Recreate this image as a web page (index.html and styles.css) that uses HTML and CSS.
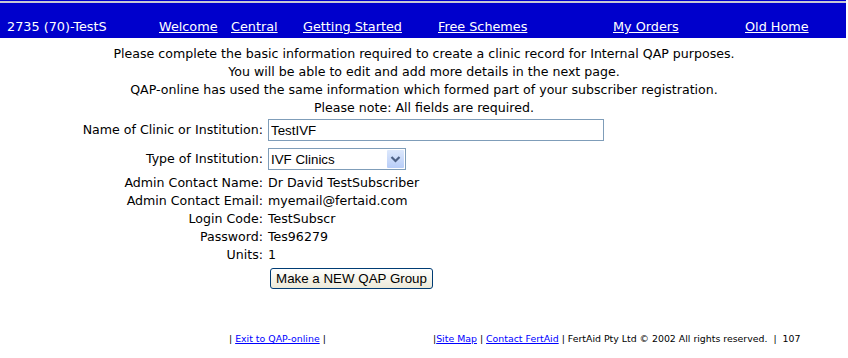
FILE: index.html
```html
<!DOCTYPE html>
<html lang="en">
<head>
  <meta charset="UTF-8" />
  <title>QAP-online - New Clinic</title>
  <link rel="stylesheet" href="styles.css">
</head>
<body>
  <div class="topbar">
    <div class="topbar-rule"></div>
    <div class="nav">
      <span class="nav-id">2735 (70)-TestS</span>
      <a href="#">Welcome</a>
      <a href="#">Central</a>
      <a href="#">Getting Started</a>
      <a href="#">Free Schemes</a>
      <a href="#">My Orders</a>
      <a href="#">Old Home</a>
    </div>
  </div>

  <div class="intro">
    <div>Please complete the basic information required to create a clinic record for Internal QAP purposes.</div>
    <div>You will be able to edit and add more details in the next page.</div>
    <div>QAP-online has used the same information which formed part of your subscriber registration.</div>
    <div>Please note: All fields are required.</div>
  </div>

  <form class="clinic-form" onsubmit="return false">
    <label class="lbl" for="clinicName">Name of Clinic or Institution:</label>
    <div class="val"><input id="clinicName" class="text-input" type="text" value="TestIVF"></div>

    <label class="lbl" for="clinicType">Type of Institution:</label>
    <div class="val val-select">
      <span class="select-wrap">
        <select id="clinicType" class="select-input">
          <option>IVF Clinics</option>
          <option>Andrology</option>
          <option>Other</option>
        </select>
        <span class="select-arrow">
          <svg width="17" height="18" viewBox="0 0 17 18">
            <path d="M4.5 7 L8.5 11 L12.5 7" fill="none" stroke="#4d6185" stroke-width="2.2"/>
          </svg>
        </span>
      </span>
    </div>

    <div class="lbl">Admin Contact Name:</div>
    <div class="val plain">Dr David TestSubscriber</div>

    <div class="lbl">Admin Contact Email:</div>
    <div class="val plain">myemail@fertaid.com</div>

    <div class="lbl">Login Code:</div>
    <div class="val plain">TestSubscr</div>

    <div class="lbl">Password:</div>
    <div class="val plain">Tes96279</div>

    <div class="lbl">Units:</div>
    <div class="val plain">1</div>

    <div></div>
    <div class="val"><button class="make-btn" type="submit">Make a NEW QAP Group</button></div>
  </form>

  <div class="footer">
    <div class="foot-left">| <a href="#">Exit to QAP-online</a> |</div>
    <div class="foot-right">|<a href="#">Site Map</a> | <a href="#">Contact FertAid</a> | FertAid Pty Ltd &copy; 2002 All rights reserved. &nbsp;| &nbsp;107</div>
  </div>
</body>
</html>
```

FILE: styles.css
```css
body {
  margin: 0;
  font-family: "DejaVu Sans", Verdana, sans-serif;
  font-size: 12.6px;
  color: #000;
  background: #fff;
}
.topbar {
  width: 846px;
  height: 38px;
  background-color: #0000cc;
  padding-top: 1px;
  box-sizing: border-box;
}
.topbar-rule {
  height: 2px;
  background-color: #c8c8d4;
}
.nav {
  display: grid;
  grid-template-columns: 152px 72px 72px 135px 175px 132px auto;
  padding: 16px 0 0 7px;
  font-size: 12.8px;
  color: #fff;
  line-height: 15px;
}
.nav a {
  color: #fff;
}
.intro {
  text-align: center;
  padding-top: 7px;
  line-height: 18px;
}
.clinic-form {
  display: grid;
  grid-template-columns: 263px auto;
  column-gap: 5px;
}
.lbl {
  text-align: right;
  line-height: 18px;
  align-self: center;
}
.val {
  padding: 2px 0;
}
.val-select {
  padding-bottom: 4px;
}
.val.plain {
  padding: 0;
  height: 18px;
  line-height: 18px;
}
.text-input {
  width: 336px;
  height: 22px;
  box-sizing: border-box;
  border: 1px solid #7f9db9;
  padding: 1px 2px;
  font-family: "Liberation Sans", Arial, sans-serif;
  font-size: 13.33px;
  margin: 0;
}
.select-wrap {
  position: relative;
  display: inline-block;
  margin-top: 3px;
}
.select-input {
  appearance: none;
  -webkit-appearance: none;
  width: 138px;
  height: 22px;
  border: 1px solid #7f9db9;
  border-radius: 0;
  background: #fff;
  padding: 0 2px;
  font-family: "Liberation Sans", Arial, sans-serif;
  font-size: 13.33px;
  color: #000;
  margin: 0;
}
.select-arrow {
  position: absolute;
  right: 2px;
  top: 2px;
  width: 17px;
  height: 18px;
  background: linear-gradient(#dde8fc, #b8cdf8);
  border-radius: 1px;
  pointer-events: none;
}
.select-arrow svg {
  display: block;
}
.make-btn {
  margin: 2px 0 0 2px;
  width: 163px;
  height: 21px;
  border: 1px solid #003c74;
  border-radius: 3px;
  background: linear-gradient(#ffffff, #ece9d8);
  font-family: "Liberation Sans", Arial, sans-serif;
  font-size: 13.33px;
  color: #000;
  padding: 0;
}
.footer {
  display: flex;
  margin-top: 42px;
  padding-left: 229px;
  font-size: 9.4px;
}
.foot-left {
  width: 204px;
}
.footer a {
  color: #0000ff;
}
```
